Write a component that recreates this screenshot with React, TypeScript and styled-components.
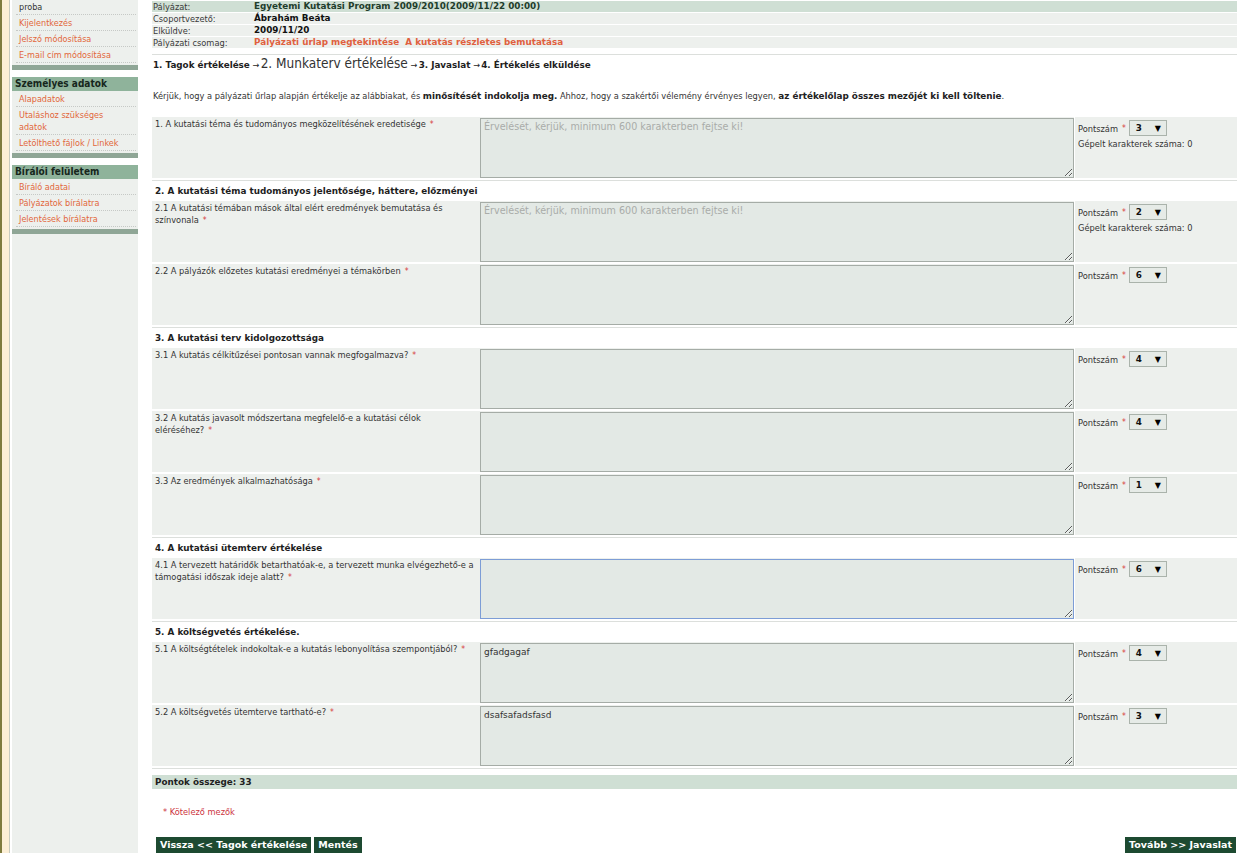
import React from "react";
import styled, { createGlobalStyle, css } from "styled-components";

interface RowData {
  label: string[];
  score: number;
  placeholder?: boolean;
  counter?: boolean;
  active?: boolean;
  value?: string;
}

interface SectionData {
  title?: string;
  rows: RowData[];
}

const sections: SectionData[] = [
  {
    rows: [
      {
        label: ["1. A kutatási téma és tudományos megközelítésének eredetisége"],
        score: 3,
        placeholder: true,
        counter: true,
      },
    ],
  },
  {
    title: "2. A kutatási téma tudományos jelentősége, háttere, előzményei",
    rows: [
      {
        label: [
          "2.1 A kutatási témában mások által elért eredmények bemutatása és",
          "színvonala",
        ],
        score: 2,
        placeholder: true,
        counter: true,
      },
      { label: ["2.2 A pályázók előzetes kutatási eredményei a témakörben"], score: 6 },
    ],
  },
  {
    title: "3. A kutatási terv kidolgozottsága",
    rows: [
      { label: ["3.1 A kutatás célkitűzései pontosan vannak megfogalmazva?"], score: 4 },
      {
        label: [
          "3.2 A kutatás javasolt módszertana megfelelő-e a kutatási célok",
          "eléréséhez?",
        ],
        score: 4,
      },
      { label: ["3.3 Az eredmények alkalmazhatósága"], score: 1 },
    ],
  },
  {
    title: "4. A kutatási ütemterv értékelése",
    rows: [
      {
        label: [
          "4.1 A tervezett határidők betarthatóak-e, a tervezett munka elvégezhető-e a",
          "támogatási időszak ideje alatt?",
        ],
        score: 6,
        active: true,
      },
    ],
  },
  {
    title: "5. A költségvetés értékelése.",
    rows: [
      {
        label: [
          "5.1 A költségtételek indokoltak-e a kutatás lebonyolítása szempontjából?",
        ],
        score: 4,
        value: "gfadgagaf",
      },
      {
        label: ["5.2 A költségvetés ütemterve tartható-e?"],
        score: 3,
        value: "dsafsafadsfasd",
      },
    ],
  },
];

const PLACEHOLDER = "Érvelését, kérjük, minimum 600 karakterben fejtse ki!";

// Styles
const boldText = css`
  font-family: "DejaVu Sans", sans-serif;
  font-weight: bold;
  font-size: 8.8px;
`;

const GlobalStyle = createGlobalStyle`
  html, body {
    margin: 0;
    padding: 0;
    background: #ffffff;
  }
  body {
    font-family: "DejaVu Sans Condensed", "DejaVu Sans", sans-serif;
    font-size: 9.2px;
    color: #333333;
  }
`;

const Page = styled.div`
  display: flex;
  height: 853px;
  overflow: hidden;
`;

const Edge = styled.div`
  flex: 0 0 7px;
  border-left: 2px solid #7e7b3e;
  border-right: 1px solid #c8cbc0;
  background: #fcefd6;
`;

const Sidebar = styled.div`
  flex: 0 0 126px;
  margin-left: 2px;
  margin-top: -1px;
  background: #edf0ed;
  font-size: 9px;
`;

const MenuList = styled.div`
  padding-bottom: 2px;
`;

const MenuItem = styled.div<{ $plain?: boolean }>`
  margin: 0 2px 0 4px;
  padding: 2px 0 1px 3px;
  line-height: 12px;
  border-bottom: 1px dotted #c6c9c6;
  color: ${(p) => (p.$plain ? "#333333" : "#e2673b")};
`;

const MenuEnd = styled.div`
  height: 5px;
  background: #8fa696;
`;

const MenuGap = styled.div`
  height: 7px;
  background: #ffffff;
`;

const MenuHead = styled.div`
  height: 14px;
  line-height: 14px;
  padding-left: 3px;
  background: #8fb39b;
  color: #16261c;
  font-weight: bold;
  font-size: 10px;
`;

const Main = styled.div`
  flex: 1;
  margin-left: 14px;
  display: flex;
  flex-direction: column;
`;

const InfoTable = styled.div`
  display: flex;
  flex-direction: column;
  gap: 1px;
  padding-top: 1px;
`;

const InfoRow = styled.div<{ $highlight?: boolean }>`
  display: grid;
  grid-template-columns: 102px 1fr;
  height: 11px;
  line-height: 11px;
  background: ${(p) => (p.$highlight ? "#cfdfd4" : "#edf0ed")};
`;

const InfoLabel = styled.div`
  padding-left: 1px;
  color: #3a3a3a;
`;

const InfoValue = styled.div<{ $tone?: "green" | "orange" }>`
  ${boldText}
  color: ${(p) =>
    p.$tone === "green" ? "#1f3d2c" : p.$tone === "orange" ? "#e0603e" : "#111111"};
`;

const Divider = styled.div`
  margin-top: 6px;
  height: 1px;
  background: #dcdfdc;
`;

const Steps = styled.div`
  display: flex;
  align-items: baseline;
  height: 16px;
  padding-left: 1px;
  color: #1e1e1e;
`;

const Step = styled.span<{ $current?: boolean }>`
  ${(p) =>
    p.$current
      ? css`
          font-size: 13.5px;
        `
      : boldText}
  color: ${(p) => (p.$current ? "#333333" : "#1e1e1e")};
`;

const Arrow = styled.span`
  font-size: 9px;
  margin: 0 1px 0 3px;
`;

const Intro = styled.p`
  margin: 19px 0 0 0;
  padding-left: 1px;
  line-height: 12px;
  height: 12px;
  color: #333333;

  b {
    ${boldText}
    color: #222222;
  }
`;

const Form = styled.div`
  margin-top: 15px;
  display: flex;
  flex-direction: column;
`;

const Section = styled.div`
  border-bottom: 1px solid #dcdfdc;
`;

const SectionTitle = styled.div`
  ${boldText}
  height: 20px;
  line-height: 20px;
  padding-left: 3px;
  color: #1e1e1e;
`;

const Row = styled.div`
  display: grid;
  grid-template-columns: 328px 594px 1fr;
  height: 61px;
  margin-bottom: 2px;
  background: #edf0ed;
`;

const RowLabel = styled.div`
  padding: 1px 0 0 3px;
  color: #333333;
`;

const LabelLine = styled.div`
  line-height: 12px;
  white-space: nowrap;
`;

const Star = styled.span`
  color: #d63a3a;
  margin-left: 4px;
  font-size: 8.5px;
`;

const Answer = styled.textarea<{ $active?: boolean }>`
  box-sizing: border-box;
  width: 594px;
  height: 60px;
  margin: 1px 0 0 0;
  padding: 2px 3px;
  border: 1px solid ${(p) => (p.$active ? "#7d9dd6" : "#a5aca6")};
  background: #e3e9e5;
  font-family: "DejaVu Sans", sans-serif;
  font-size: 9px;
  line-height: 12px;
  color: #333333;
  outline: none;

  &::placeholder {
    color: #a9aca9;
    font-size: 9.6px;
  }
`;

const ScoreCell = styled.div`
  border-left: 1px solid #ffffff;
  padding: 3px 0 0 3px;
  display: flex;
  flex-direction: column;
  gap: 2px;
`;

const ScoreLine = styled.div`
  display: flex;
  align-items: center;
  height: 16px;
`;

const FakeSelect = styled.div`
  ${boldText}
  box-sizing: border-box;
  width: 38px;
  height: 16px;
  margin-left: 3px;
  border: 1px solid #aab3ab;
  background: #e6ebe7;
  display: flex;
  align-items: center;
  justify-content: space-between;
  padding: 0 5px 0 6px;
  color: #111111;
`;

const Caret = styled.span`
  font-size: 8px;
  color: #000000;
`;

const Counter = styled.div`
  line-height: 11px;
`;

const Total = styled.div`
  ${boldText}
  margin-top: 6px;
  height: 14px;
  line-height: 14px;
  padding-left: 3px;
  background: #cfdfd4;
  color: #1e1e1e;
`;

const Required = styled.div`
  margin: 17px 0 0 11px;
  line-height: 12px;
  color: #cc3340;
`;

const Buttons = styled.div`
  margin-top: 19px;
  display: flex;
  gap: 3px;
  padding-left: 4px;
`;

const Button = styled.button<{ $right?: boolean }>`
  ${boldText}
  font-size: 9.5px;
  height: 16px;
  padding: 0 4px;
  border: none;
  background: #1d4a31;
  color: #ffffff;
  line-height: 16px;
  margin-left: ${(p) => (p.$right ? "auto" : "0")};
  margin-right: ${(p) => (p.$right ? "1px" : "0")};
  cursor: pointer;
`;

const FormRow = ({ row }: { row: RowData }) => (
  <Row>
    <RowLabel>
      {row.label.map((line, i) => (
        <LabelLine key={i}>
          {line}
          {i === row.label.length - 1 && <Star>*</Star>}
        </LabelLine>
      ))}
    </RowLabel>
    <Answer
      $active={row.active}
      placeholder={row.placeholder ? PLACEHOLDER : undefined}
      defaultValue={row.value}
    />
    <ScoreCell>
      <ScoreLine>
        Pontszám<Star>*</Star>
        <FakeSelect>
          {row.score}
          <Caret>▼</Caret>
        </FakeSelect>
      </ScoreLine>
      {row.counter && <Counter>Gépelt karakterek száma: 0</Counter>}
    </ScoreCell>
  </Row>
);

const App = () => {
  return (
    <Page>
      <GlobalStyle />
      <Edge />
      <Sidebar>
        <MenuList>
          <MenuItem $plain>proba</MenuItem>
          <MenuItem>Kijelentkezés</MenuItem>
          <MenuItem>Jelszó módosítása</MenuItem>
          <MenuItem>E-mail cím módosítása</MenuItem>
        </MenuList>
        <MenuEnd />
        <MenuGap />
        <MenuHead>Személyes adatok</MenuHead>
        <MenuList>
          <MenuItem>Alapadatok</MenuItem>
          <MenuItem>
            Utaláshoz szükséges
            <br />
            adatok
          </MenuItem>
          <MenuItem>Letölthető fájlok / Linkek</MenuItem>
        </MenuList>
        <MenuEnd />
        <MenuGap />
        <MenuHead>Bírálói felületem</MenuHead>
        <MenuList>
          <MenuItem>Bíráló adatai</MenuItem>
          <MenuItem>Pályázatok bírálatra</MenuItem>
          <MenuItem>Jelentések bírálatra</MenuItem>
        </MenuList>
        <MenuEnd />
      </Sidebar>
      <Main>
        <InfoTable>
          <InfoRow $highlight>
            <InfoLabel>Pályázat:</InfoLabel>
            <InfoValue $tone="green">
              Egyetemi Kutatási Program 2009/2010(2009/11/22 00:00)
            </InfoValue>
          </InfoRow>
          <InfoRow>
            <InfoLabel>Csoportvezető:</InfoLabel>
            <InfoValue>Ábrahám Beáta</InfoValue>
          </InfoRow>
          <InfoRow>
            <InfoLabel>Elküldve:</InfoLabel>
            <InfoValue>2009/11/20</InfoValue>
          </InfoRow>
          <InfoRow>
            <InfoLabel>Pályázati csomag:</InfoLabel>
            <InfoValue $tone="orange">
              Pályázati űrlap megtekintése&nbsp;&nbsp;A kutatás részletes bemutatása
            </InfoValue>
          </InfoRow>
        </InfoTable>
        <Divider />
        <Steps>
          <Step>1. Tagok értékelése</Step>
          <Arrow>→</Arrow>
          <Step $current>2. Munkaterv értékelése</Step>
          <Arrow>→</Arrow>
          <Step>3. Javaslat</Step>
          <Arrow>→</Arrow>
          <Step>4. Értékelés elküldése</Step>
        </Steps>
        <Intro>
          Kérjük, hogy a pályázati űrlap alapján értékelje az alábbiakat, és{" "}
          <b>minősítését indokolja meg.</b> Ahhoz, hogy a szakértői vélemény
          érvényes legyen, <b>az értékelőlap összes mezőjét ki kell töltenie</b>.
        </Intro>
        <Form>
          {sections.map((section, i) => (
            <Section key={i}>
              {section.title && <SectionTitle>{section.title}</SectionTitle>}
              {section.rows.map((row) => (
                <FormRow key={row.label[0]} row={row} />
              ))}
            </Section>
          ))}
        </Form>
        <Total>Pontok összege: 33</Total>
        <Required>* Kötelező mezők</Required>
        <Buttons>
          <Button>Vissza &lt;&lt; Tagok értékelése</Button>
          <Button>Mentés</Button>
          <Button $right>Tovább &gt;&gt; Javaslat</Button>
        </Buttons>
      </Main>
    </Page>
  );
};

export default App;
